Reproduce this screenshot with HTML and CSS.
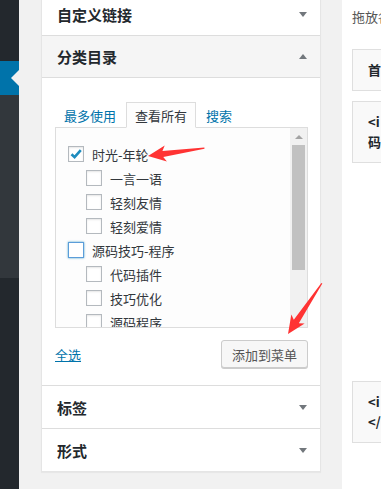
FILE: index.html
```html
<!DOCTYPE html>
<html lang="zh-CN">
<head>
  <meta charset="UTF-8">
  <title>菜单</title>
  <link rel="stylesheet" href="styles.css">
</head>
<body>

  <div id="adminmenu">
    <div class="menu-top"></div>
    <div class="menu-current"><span class="menu-arrow"></span></div>
    <div class="menu-sub"></div>
  </div>

  <div class="wrap">
    <div class="side-panel">
      <div class="section">
        <h3 class="section-title">自定义链接<span class="toggle"></span></h3>
      </div>

      <div class="section open">
        <h3 class="section-title">分类目录<span class="toggle up"></span></h3>
        <div class="section-content">
          <ul class="tabs">
            <li><a href="#">最多使用</a></li>
            <li class="active">查看所有</li>
            <li><a href="#">搜索</a></li>
          </ul>
          <div class="tabs-panel">
            <ul class="checklist">
              <li>
                <div class="item">
                  <span class="cb"><svg width="14" height="14" viewBox="0 0 14 14"><path d="M2.5 7.2 L5.6 10.2 L11.8 3.2" fill="none" stroke="#1e8cbe" stroke-width="2.6"/></svg></span>时光-年轮
                </div>
                <ul class="children">
                  <li><div class="item"><span class="cb"></span>一言一语</div></li>
                  <li><div class="item"><span class="cb"></span>轻刻友情</div></li>
                  <li><div class="item"><span class="cb"></span>轻刻爱情</div></li>
                </ul>
              </li>
              <li>
                <div class="item"><span class="cb focus"></span>源码技巧-程序</div>
                <ul class="children">
                  <li><div class="item"><span class="cb"></span>代码插件</div></li>
                  <li><div class="item"><span class="cb"></span>技巧优化</div></li>
                  <li><div class="item"><span class="cb"></span>源码程序</div></li>
                </ul>
              </li>
            </ul>
            <div class="scrollbar">
              <div class="scroll-up"></div>
              <div class="scroll-thumb"></div>
            </div>
          </div>
          <div class="section-footer">
            <a href="#" class="select-all">全选</a>
            <button class="button">添加到菜单</button>
          </div>
        </div>
      </div>

      <div class="section">
        <h3 class="section-title">标签<span class="toggle"></span></h3>
      </div>
      <div class="section">
        <h3 class="section-title">形式<span class="toggle"></span></h3>
      </div>
    </div>

    <div class="menu-management">
      <p class="drag-instructions">拖放各个项目到您喜欢的顺序，点击右侧的箭头可进行更详细的设置。</p>
      <ul class="menu">
        <li class="menu-item">首页</li>
        <li class="menu-item"><span class="line">&lt;i class="fa fa-code"&gt;&lt;/i&gt;源</span><span class="line">码技巧-程序</span></li>
        <li class="menu-item depth-1">代码插件</li>
        <li class="menu-item depth-1">技巧优化</li>
        <li class="menu-item depth-1">源码程序</li>
        <li class="menu-item depth-1">一言一语</li>
        <li class="menu-item"><span class="line">&lt;i class="fa fa-heart"&gt;</span><span class="line">&lt;/i&gt;时光-年轮</span></li>
      </ul>
    </div>
  </div>

  <svg class="annotations" width="381" height="489" viewBox="0 0 381 489">
    <polygon transform="translate(148 156) rotate(-8)" points="0,0 18,-8 15,-3 57,-0.6 57,0.6 15,3 18,8" fill="#f33"/>
    <polygon transform="translate(288 334) rotate(-56.3)" points="0,0 18,-8 15,-3 61,-0.6 61,0.6 15,3 18,8" fill="#f33"/>
  </svg>

</body>
</html>
```

FILE: styles.css
```css
* {
  box-sizing: border-box;
}

body {
  margin: 0;
  height: 489px;
  overflow: hidden;
  display: flex;
  position: relative;
  background: #f1f1f1;
  font-family: "Noto Sans CJK SC", sans-serif;
  font-size: 13px;
  color: #444;
}

/* admin sidebar */
#adminmenu {
  width: 19px;
  flex-shrink: 0;
  background: #23282d;
}

.menu-top {
  height: 61px;
}

.menu-current {
  height: 34px;
  background: #0073aa;
  position: relative;
}

.menu-arrow {
  position: absolute;
  right: 0;
  top: 9px;
  border-top: 8px solid transparent;
  border-bottom: 8px solid transparent;
  border-right: 8px solid #f1f1f1;
}

.menu-sub {
  height: 183px;
  background: #32373c;
}

.wrap {
  flex: 1;
  min-width: 0;
  display: flex;
  gap: 21px;
  padding-left: 22px;
}

/* left accordion */
.side-panel {
  width: 280px;
  flex-shrink: 0;
  align-self: flex-start;
  margin-top: -8px;
  background: #fff;
  border: 1px solid #e5e5e5;
  box-shadow: 0 1px 1px rgba(0,0,0,0.04);
}

.section {
  border-bottom: 1px solid #ddd;
}

.section:last-child {
  border-bottom: 0;
}

.section-title {
  margin: 0;
  height: 42px;
  padding: 0 13px 0 15px;
  display: flex;
  justify-content: space-between;
  align-items: center;
  font-size: 15px;
  font-weight: 600;
  color: #23282d;
}

.open .section-title {
  background: #f5f5f5;
  border-bottom: 1px solid #ddd;
}

.toggle {
  border-left: 4px solid transparent;
  border-right: 4px solid transparent;
  border-top: 5px solid #72777c;
}

.toggle.up {
  border-top: 0;
  border-bottom: 5px solid #72777c;
}

.section-content {
  padding: 24px 12px 17px 13px;
}

.tabs {
  display: flex;
  gap: 1px;
  list-style: none;
  margin: 0 0 -1px;
  padding: 0;
  line-height: 18px;
}

.tabs li {
  padding: 4px 8px 2px;
  border: 1px solid transparent;
}

.tabs a {
  color: #0073aa;
  text-decoration: none;
}

.tabs li.active {
  position: relative;
  border-color: #ddd;
  border-bottom-color: #fdfdfd;
  background: #fdfdfd;
  color: #32373c;
}

.tabs-panel {
  display: flex;
  height: 201px;
  border: 1px solid #ddd;
  background: #fdfdfd;
}

.checklist {
  flex: 1;
  list-style: none;
  margin: 0;
  padding: 14px 0 0 12px;
  overflow: hidden;
}

.children {
  list-style: none;
  margin: 0;
  padding-left: 18px;
}

.item {
  height: 24px;
  display: flex;
  align-items: center;
  gap: 8px;
  color: #32373c;
}

.cb {
  width: 16px;
  height: 16px;
  flex-shrink: 0;
  display: flex;
  align-items: center;
  justify-content: center;
  border: 1px solid #b4b9be;
  background: #fff;
  box-shadow: inset 0 1px 2px rgba(0,0,0,0.1);
}

.cb.focus {
  border-color: #5b9dd9;
  box-shadow: 0 0 2px rgba(30,140,190,0.8);
}

.scrollbar {
  width: 17px;
  background: #f1f1f1;
  display: flex;
  flex-direction: column;
  align-items: center;
}

.scroll-up {
  height: 17px;
  display: flex;
  align-items: center;
}

.scroll-up::before {
  content: "";
  border-left: 4px solid transparent;
  border-right: 4px solid transparent;
  border-bottom: 4px solid #a3a3a3;
}

.scroll-thumb {
  width: 13px;
  height: 125px;
  background: #c1c1c1;
}

.section-footer {
  display: flex;
  justify-content: space-between;
  align-items: center;
  margin-top: 12px;
}

.select-all {
  color: #0073aa;
  text-decoration: underline;
}

.button {
  height: 28px;
  padding: 0 10px;
  border: 1px solid #ccc;
  border-radius: 3px;
  background: #f7f7f7;
  box-shadow: 0 1px 0 #ccc;
  color: #555;
  font-family: inherit;
  font-size: 13px;
}

/* menu structure */
.menu-management {
  flex: 1;
  min-width: 0;
  overflow: hidden;
  background: #fff;
  padding: 7px 0 0 10px;
}

.drag-instructions {
  margin: 0 0 22px;
  line-height: 20px;
  white-space: nowrap;
  color: #555;
}

.menu {
  list-style: none;
  margin: 0;
  padding: 0;
}

.menu-item {
  width: 380px;
  margin-bottom: 10px;
  padding: 10px 15px;
  border: 1px solid #dfdfdf;
  background: #f9f9f9;
  font-weight: 600;
  line-height: 20px;
  color: #23282d;
  white-space: nowrap;
}

.menu-item .line {
  display: block;
}

.menu-item.depth-1 {
  margin-left: 30px;
}

.annotations {
  position: absolute;
  top: 0;
  left: 0;
  pointer-events: none;
}
```
